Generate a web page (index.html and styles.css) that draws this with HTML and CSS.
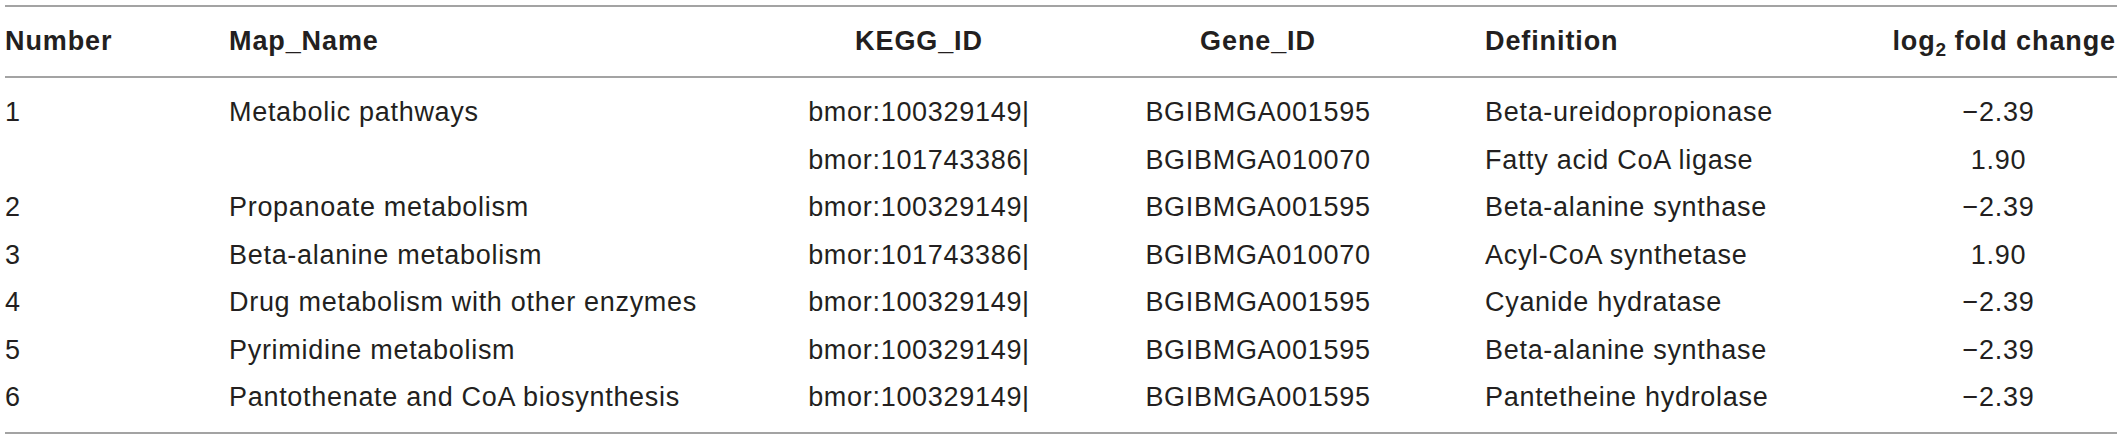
FILE: index.html
```html
<!DOCTYPE html>
<html lang="en">
<head>
<meta charset="utf-8">
<title>KEGG pathways</title>
<link rel="stylesheet" href="styles.css">
</head>
<body>
<table class="kegg">
  <colgroup>
    <col class="c-num">
    <col class="c-map">
    <col class="c-kegg">
    <col class="c-gene">
    <col class="c-def">
    <col class="c-fold">
  </colgroup>
  <thead>
    <tr>
      <th class="left">Number</th>
      <th class="left">Map_Name</th>
      <th class="center">KEGG_ID</th>
      <th class="center">Gene_ID</th>
      <th class="left def">Definition</th>
      <th class="center fold">log<sub class="sub">2</sub> fold change</th>
    </tr>
  </thead>
  <tbody>
    <tr class="first">
      <td class="left">1</td>
      <td class="left">Metabolic pathways</td>
      <td class="center">bmor:100329149|</td>
      <td class="center">BGIBMGA001595</td>
      <td class="left def">Beta-ureidopropionase</td>
      <td class="center">−2.39</td>
    </tr>
    <tr>
      <td class="left"></td>
      <td class="left"></td>
      <td class="center">bmor:101743386|</td>
      <td class="center">BGIBMGA010070</td>
      <td class="left def">Fatty acid CoA ligase</td>
      <td class="center">1.90</td>
    </tr>
    <tr>
      <td class="left">2</td>
      <td class="left">Propanoate metabolism</td>
      <td class="center">bmor:100329149|</td>
      <td class="center">BGIBMGA001595</td>
      <td class="left def">Beta-alanine synthase</td>
      <td class="center">−2.39</td>
    </tr>
    <tr>
      <td class="left">3</td>
      <td class="left">Beta-alanine metabolism</td>
      <td class="center">bmor:101743386|</td>
      <td class="center">BGIBMGA010070</td>
      <td class="left def">Acyl-CoA synthetase</td>
      <td class="center">1.90</td>
    </tr>
    <tr>
      <td class="left">4</td>
      <td class="left">Drug metabolism with other enzymes</td>
      <td class="center">bmor:100329149|</td>
      <td class="center">BGIBMGA001595</td>
      <td class="left def">Cyanide hydratase</td>
      <td class="center">−2.39</td>
    </tr>
    <tr>
      <td class="left">5</td>
      <td class="left">Pyrimidine metabolism</td>
      <td class="center">bmor:100329149|</td>
      <td class="center">BGIBMGA001595</td>
      <td class="left def">Beta-alanine synthase</td>
      <td class="center">−2.39</td>
    </tr>
    <tr class="last">
      <td class="left">6</td>
      <td class="left">Pantothenate and CoA biosynthesis</td>
      <td class="center">bmor:100329149|</td>
      <td class="center">BGIBMGA001595</td>
      <td class="left def">Pantetheine hydrolase</td>
      <td class="center">−2.39</td>
    </tr>
  </tbody>
</table>
</body>
</html>
```

FILE: styles.css
```css
html, body {
  margin: 0;
  padding: 0;
  background: #ffffff;
}

body {
  font-family: "Liberation Sans", Arial, sans-serif;
  color: #231f20;
}

.kegg {
  margin: 5px 0 0 5px;
  width: 2112px;
  table-layout: fixed;
  border-collapse: separate;
  border-spacing: 0;
  font-size: 27px;
}

.c-num  { width: 224px; }
.c-map  { width: 571px; }
.c-kegg { width: 238px; }
.c-gene { width: 440px; }
.c-def  { width: 402px; }
.c-fold { width: 237px; }

.kegg th,
.kegg td {
  padding: 0;
  white-space: nowrap;
  overflow: visible;
}

.kegg th {
  font-weight: bold;
  letter-spacing: 0.9px;
  line-height: 69px;
  height: 69px;
  border-top: 2px solid #a3a3a3;
  border-bottom: 2px solid #a3a3a3;
}

.kegg td {
  font-weight: normal;
  letter-spacing: 0.7px;
  line-height: 47.5px;
  height: 47.5px;
}

.kegg tr.first td {
  padding-top: 11px;
}

.kegg tr.last td {
  padding-bottom: 10.5px;
  border-bottom: 2px solid #a3a3a3;
}

.left { text-align: left; }
.center { text-align: center; }
.def { padding-left: 7px !important; }

.fold {
  text-align: right !important;
  padding-right: 1px !important;
}

.sub {
  font-size: 19px;
  line-height: 0;
  vertical-align: -6px;
  letter-spacing: 0;
}
```
